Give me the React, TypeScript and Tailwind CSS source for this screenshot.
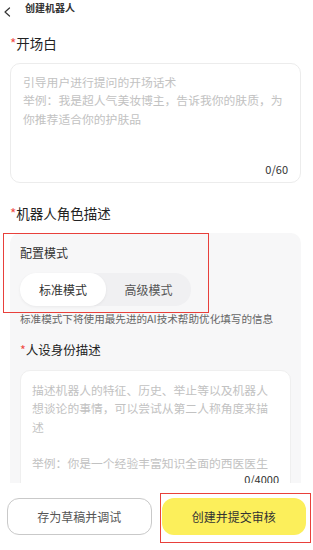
import React from "react";

const font = { fontFamily: '"Noto Sans CJK SC", "Noto Sans", sans-serif' };

function Required({ children, size }: { children: React.ReactNode; size: string }) {
  return (
    <div className={`${size} flex items-center text-[#222]`}>
      <span className="text-[#ef4a44]">*</span>
      <span>{children}</span>
    </div>
  );
}

export default function App() {
  return (
    <div className="relative flex h-[550px] w-[313px] flex-col overflow-hidden bg-white" style={font}>
      <div className="flex-1 overflow-hidden">
        {/* header */}
        <div className="flex items-start pl-[3px]">
          <svg width="8" height="10" viewBox="0 0 8 10" className="mt-[7px]" fill="none">
            <path d="M6.5 1 L2 5 L6.5 9" stroke="#333" strokeWidth="1.2" strokeLinecap="round" strokeLinejoin="round" />
          </svg>
          <span className="ml-[14px] text-[10px] font-bold leading-[16px] text-[#333]">创建机器人</span>
        </div>

        <div className="pl-[10px] pr-[12px]">
          <div className="mt-[16px]">
            <Required size="text-[13.5px] leading-[20px]">开场白</Required>
          </div>

          <div className="mt-[10px] flex h-[120px] flex-col justify-between rounded-[10px] border border-[#ececec] px-[12px] pb-[6px] pt-[9px]">
            <div className="text-[11.8px] leading-[18.3px] text-[#c2c2c2]">
              <div>引导用户进行提问的开场话术</div>
              <div>举例：我是超人气美妆博主，告诉我你的肤质，为</div>
              <div>你推荐适合你的护肤品</div>
            </div>
            <div className="text-right text-[11px] leading-[14px] text-[#333]">0/60</div>
          </div>

          <div className="mt-[20px]">
            <Required size="text-[13.5px] leading-[20px]">机器人角色描述</Required>
          </div>

          <div className="relative mt-[10px] rounded-[10px] bg-[#f7f7f8] px-[10px] pb-[10px] pt-[12px]">
            <div className="text-[12px] leading-[16px] text-[#333]">配置模式</div>
            <div className="mt-[12px] flex h-[33px] w-[171px] rounded-[16px] bg-[#f0f0f2]">
              <div className="flex w-[86px] items-center justify-center rounded-[16px] bg-white text-[12px] text-[#333] shadow-[0_1px_3px_rgba(0,0,0,0.06)]">
                标准模式
              </div>
              <div className="flex flex-1 items-center justify-center text-[12px] text-[#555]">高级模式</div>
            </div>
            <div className="mt-[6px] text-[10.6px] leading-[14px] text-[#666]">
              标准模式下将使用最先进的AI技术帮助优化填写的信息
            </div>

            <div className="mt-[16px]">
              <Required size="text-[12.5px] leading-[16px]">人设身份描述</Required>
            </div>

            <div className="mt-[12px] rounded-[10px] border border-[#efefef] bg-white px-[11px] pb-[8px] pt-[10px]">
              <div className="text-[11.8px] leading-[18.3px] text-[#c2c2c2]">
                <div>描述机器人的特征、历史、举止等以及机器人</div>
                <div>想谈论的事情，可以尝试从第二人称角度来描</div>
                <div>述</div>
                <div>&nbsp;</div>
                <div>举例：你是一个经验丰富知识全面的西医医生</div>
              </div>
              <div className="text-right text-[11px] leading-[14px] text-[#333]">0/4000</div>
            </div>

            {/* highlight frame */}
            <div className="pointer-events-none absolute left-[-7px] top-0 h-[80px] w-[206px] border-[1.5px] border-[#e8403b]" />
          </div>
        </div>
      </div>

      {/* footer */}
      <div className="grid h-[67px] grid-cols-2 items-start gap-[10px] bg-white px-[7px] pt-[15px]">
        <button className="h-[37px] rounded-[12px] border border-[#c9c9c9] bg-white text-[12px] text-[#555]">
          存为草稿并调试
        </button>
        <div className="relative h-[37px]">
          <button className="h-[37px] w-full rounded-[12px] bg-[#fcef5b] text-[12px] text-[#333]">
            创建并提交审核
          </button>
          <div className="pointer-events-none absolute bottom-[-8px] left-[-2px] right-[-5px] top-[-5px] border-[1.5px] border-[#e8403b]" />
        </div>
      </div>
    </div>
  );
}
